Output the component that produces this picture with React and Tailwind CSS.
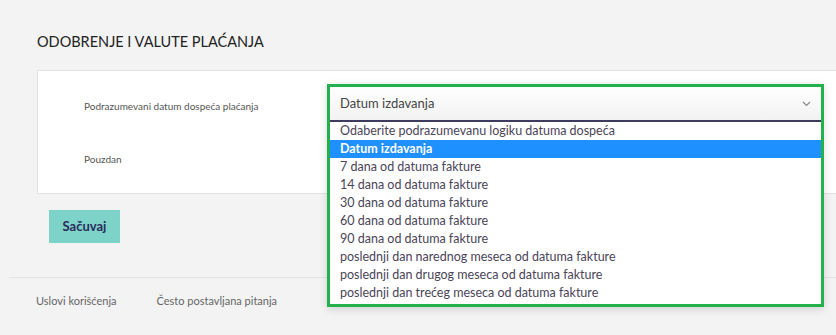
const options = [
  "Odaberite podrazumevanu logiku datuma dospeća",
  "Datum izdavanja",
  "7 dana od datuma fakture",
  "14 dana od datuma fakture",
  "30 dana od datuma fakture",
  "60 dana od datuma fakture",
  "90 dana od datuma fakture",
  "poslednji dan narednog meseca od datuma fakture",
  "poslednji dan drugog meseca od datuma fakture",
  "poslednji dan trećeg meseca od datuma fakture",
];

function App() {
  return (
    <div
      className="relative h-[335px] w-full overflow-hidden bg-[#f3f3f3]"
      style={{ fontFamily: "Lato, 'Noto Sans', sans-serif" }}
    >
      <div className="pt-[31px] pl-[37px]">
        <h2 className="text-[14.5px] leading-[22px] text-[#222]">ODOBRENJE I VALUTE PLAĆANJA</h2>
      </div>

      <div className="mt-[17px] ml-[37px] mr-[-10px] h-[124px] border border-[#e2e2e2] bg-white">
        <div className="flex h-[62px] items-center pl-[46px] pt-[8px] text-[10px] text-[#555]">
          Podrazumevani datum dospeća plaćanja
        </div>
        <div className="flex h-[52px] items-center pl-[46px] text-[10px] text-[#555]">Pouzdan</div>
      </div>

      <div className="mt-[16px] ml-[49px]">
        <button className="h-[33px] w-[71px] bg-[#7dd3c8] text-[13px] font-bold text-[#2b2b5c]">
          Sačuvaj
        </button>
      </div>

      <footer className="mt-[34px] ml-[9px] flex h-[48px] items-center gap-[40px] border-t border-[#e3e3e3] pl-[27px] text-[11px] text-[#666]">
        <span>Uslovi korišćenja</span>
        <span>Često postavljana pitanja</span>
      </footer>

      {/* open select with highlight frame */}
      <div className="absolute left-[327px] top-[84px] w-[497px] border-[3px] border-[#22b14c] bg-white shadow-[0_2px_8px_rgba(0,0,0,0.15)]">
        <div className="flex h-[35px] items-center justify-between border-b-2 border-[#3d3b5e] bg-gradient-to-b from-white to-[#f2f2f2] px-[10px] text-[13px] text-[#444]">
          <span>Datum izdavanja</span>
          <svg width="9" height="6" viewBox="0 0 9 6" fill="none" stroke="#888" strokeWidth="1.2">
            <path d="M1 1l3.5 3.5L8 1" />
          </svg>
        </div>
        <ul className="pb-[2px] text-[12.5px] leading-[18px]">
          {options.map((o, i) => (
            <li
              key={o}
              className={
                i === 1
                  ? "h-[18px] bg-[#1e90ff] px-[10px] font-bold text-white"
                  : "h-[18px] px-[10px] text-[#4a4458]"
              }
            >
              {o}
            </li>
          ))}
        </ul>
      </div>
    </div>
  );
}

export default App;
